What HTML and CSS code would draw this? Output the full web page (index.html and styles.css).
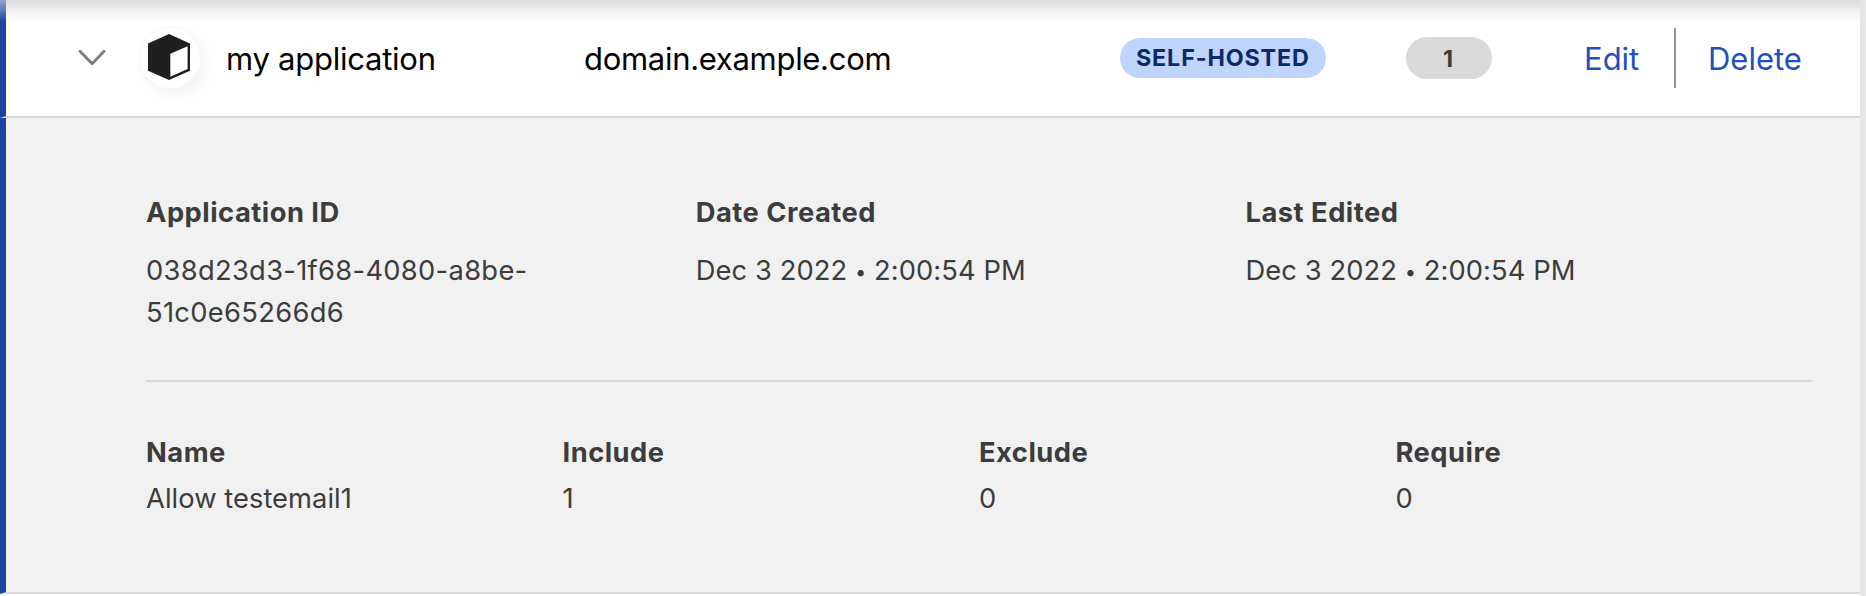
FILE: index.html
```
<!DOCTYPE html>
<html lang="en">
<head>
<meta charset="utf-8">
<title>Applications</title>
<link rel="stylesheet" href="styles.css">
</head>
<body>
<main class="table">
  <section class="row row-summary">
    <svg class="chevron" viewBox="0 0 28 18" aria-hidden="true"><path d="M2 2.2 14.2 14.8 26 2.2"/></svg>
    <span class="app-icon">
      <svg class="cube" viewBox="0 0 42 46" aria-hidden="true">
        <path class="cube-body" d="M21 0 42 9.5V36.7L21 46 0 36.7V9.5Z"/>
        <path class="cube-face" d="M22.3 19.7 39.6 12.3V35L22.3 42.8Z"/>
      </svg>
    </span>
    <span class="app-name"><span class="t-name">my application</span></span>
    <span class="app-domain"><span class="t-domain">domain.example.com</span></span>
    <span class="badge">SELF-HOSTED</span>
    <span class="count">1</span>
    <nav class="actions">
      <a class="link link-edit">Edit</a>
      <a class="link link-delete">Delete</a>
    </nav>
  </section>
  <section class="row row-details">
    <dl class="meta">
      <div class="meta-item"><dt>Application ID</dt><dd class="app-id">038d23d3-1f68-4080-a8be-51c0e65266d6</dd></div>
      <div class="meta-item"><dt>Date Created</dt><dd class="date">Dec 3 2022 <span class="dot">•</span> 2:00:54 PM</dd></div>
      <div class="meta-item"><dt>Last Edited</dt><dd class="date">Dec 3 2022 <span class="dot">•</span> 2:00:54 PM</dd></div>
    </dl>
    <dl class="policy">
      <div><dt>Name</dt><dd class="policy-name">Allow testemail1</dd></div>
      <div><dt>Include</dt><dd>1</dd></div>
      <div><dt>Exclude</dt><dd>0</dd></div>
      <div><dt>Require</dt><dd>0</dd></div>
    </dl>
  </section>
  <div class="top-shade"></div>
  <div class="corner-shade"></div>
</main>
</body>
</html>
```
FILE: styles.css
```
* { box-sizing: border-box; }
body {
  margin: 0;
  height: 596px;
  overflow: hidden;
  background: linear-gradient(90deg, #e4e4e4 1860px, #e9e9e9 1866px);
  font-family: Inter, "Liberation Sans", sans-serif;
  color: #3c3c3c;
}
.table {
  position: relative;
  width: 1860px;
  height: 596px;
  background: #fff;
  overflow: hidden;
}
.row {
  border-left: 6px solid #1c44a0;
  border-bottom: 2px solid #d9d9d9;
}
.row-summary {
  display: flex;
  align-items: center;
  height: 118px;
  padding-left: 72px;
  font-size: 31px;
  color: #000;
}
.chevron { width: 28px; height: 18px; flex: none; }
.chevron path {
  fill: none;
  stroke: #797c82;
  stroke-width: 2.8;
  stroke-linecap: round;
  stroke-linejoin: round;
}
.app-icon {
  display: flex;
  justify-content: center;
  flex: none;
  width: 60px;
  height: 60px;
  margin-left: 34px;
  padding: 6px 2px 0 0;
  border-radius: 50%;
  background: #fff;
  box-shadow: 0 0 0 1.5px #f8f8f8, 5px 6px 14px rgba(0, 0, 0, .05);
}
.cube { width: 42px; height: 46px; }
.cube-body { fill: #1d1f20; }
.cube-face { fill: #fff; }
.app-name { width: 358px; margin-left: 26px; }
.app-domain { width: 536px; }
.t-name { letter-spacing: -.25px; }
.t-domain { letter-spacing: -.3px; }
.badge {
  width: 206px;
  height: 40px;
  padding-left: 16px;
  border-radius: 20px;
  background: #bfd5fe;
  color: #0c2a68;
  font-size: 23.3px;
  font-weight: 700;
  line-height: 40px;
  letter-spacing: .85px;
  white-space: nowrap;
}
.count {
  width: 86px;
  height: 42px;
  margin-left: 80px;
  padding-right: 2px;
  border-radius: 21px;
  background: #d9d9d9;
  color: #3c3c3c;
  font-size: 23.3px;
  font-weight: 700;
  line-height: 43px;
  text-align: center;
}
.actions { display: flex; margin-left: 92px; }
.link {
  height: 60px;
  color: #1f50bd;
  line-height: 62px;
  letter-spacing: 0;
}
.link-edit { width: 92px; border-right: 2px solid #8f949b; }
.link-delete { padding-left: 32px; }
.row-details {
  height: 476px;
  padding: 78px 48px 0 140px;
  background: #f1f1f1;
  font-size: 27.3px;
}
dl, dd { margin: 0; }
dt { font-weight: 700; line-height: 34px; letter-spacing: .5px; }
.meta {
  display: flex;
  height: 186px;
  border-bottom: 2px solid #d9d9d9;
}
.meta-item { width: 33%; padding-right: 130px; }
.meta dd { margin-top: 20px; line-height: 42px; }
.app-id { letter-spacing: .32px; }
.date { white-space: nowrap; letter-spacing: .08px; }
.dot { font-size: 20px; position: relative; top: -1px; }
.policy {
  display: grid;
  grid-template-columns: repeat(4, 1fr);
  padding-top: 54px;
}
.policy dd { margin-top: 8px; line-height: 42px; letter-spacing: .05px; }
.top-shade {
  position: absolute;
  inset: 0 0 auto 6px;
  height: 24px;
  background: linear-gradient(rgba(0, 0, 0, .13), rgba(0, 0, 0, .11) 20%, rgba(0, 0, 0, .05) 50%, rgba(0, 0, 0, .01) 85%, transparent);
}
/* Fades the accent bar into the scroll shadow */
.corner-shade {
  position: absolute;
  top: 0;
  left: 0;
  width: 6px;
  height: 22px;
  background: linear-gradient(rgba(225, 228, 235, .6), rgba(225, 228, 235, .4) 35%, transparent);
}
```
